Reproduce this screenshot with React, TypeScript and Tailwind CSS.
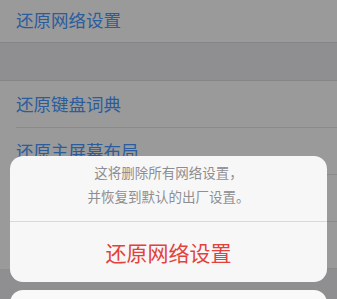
export default function App() {
  const font = { fontFamily: '"Noto Sans CJK SC", "Noto Sans", sans-serif' };

  return (
    <div
      className="relative w-[337px] h-[299px] overflow-hidden bg-[#8f8f91]"
      style={font}
    >
      {/* settings list behind the dim */}
      <div className="flex flex-col">
        <div className="h-[44px] bg-[#9a9a9a] flex items-center pl-[16px] -mt-[2px]">
          <span className="text-[17.5px] text-[#2b5c9c] leading-none">还原网络设置</span>
        </div>
        <div className="h-[39px] bg-[#8f8f91] border-y border-[#858585]" />
        <div className="bg-[#9a9a9a] pl-[16px]">
          <div className="h-[47px] flex items-center border-b border-[#8a8a8a]">
            <span className="text-[17.5px] text-[#2b5c9c] leading-none">还原键盘词典</span>
          </div>
          <div className="h-[47px] flex items-center border-b border-[#8a8a8a]">
            <span className="text-[17.5px] text-[#2b5c9c] leading-none">还原主屏幕布局</span>
          </div>
          <div className="h-[47px] border-b border-[#8a8a8a]" />
          <div className="h-[47px] border-b border-[#8a8a8a]" />
        </div>
      </div>

      {/* action sheet */}
      <div className="absolute left-[10px] right-[10px] top-[156px] flex flex-col gap-[8px]">
        <div className="bg-[#f7f7f8] rounded-[13px] overflow-hidden">
          <div className="pt-[4px] pb-[13px] text-center text-[13.5px] leading-[24px] text-[#8e8e90]">
            <div>这将删除所有网络设置，</div>
            <div>并恢复到默认的出厂设置。</div>
          </div>
          <div className="h-[61px] border-t border-[#d9d9dc] flex items-center justify-center">
            <span className="text-[21px] text-[#e3423b] leading-none">还原网络设置</span>
          </div>
        </div>
        <div className="bg-[#f9f9f9] rounded-[13px] h-[57px]" />
      </div>
    </div>
  );
}
